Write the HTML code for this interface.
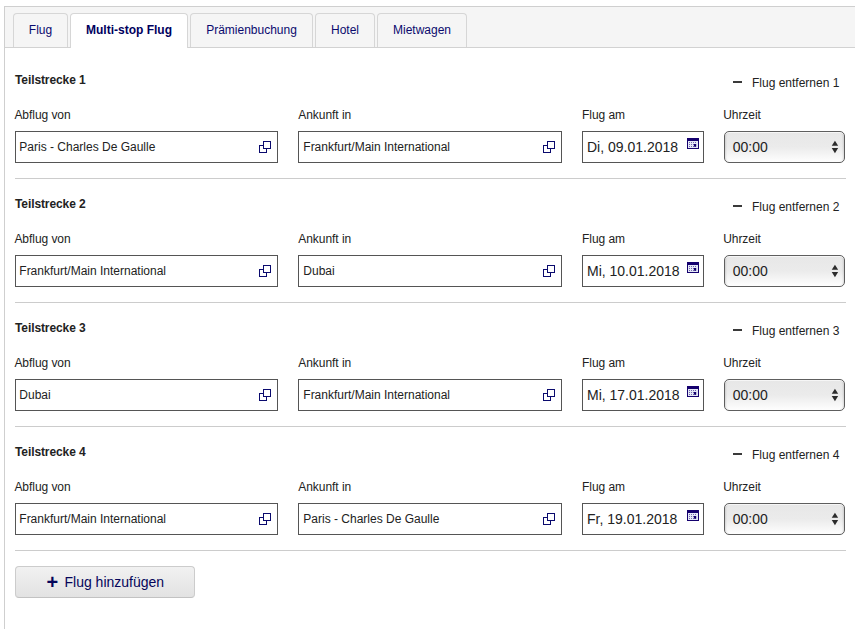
<!DOCTYPE html>
<html lang="de">
<head>
<meta charset="utf-8">
<title>Multi-stop Flug</title>
<style>
*{box-sizing:border-box;margin:0;padding:0}
html,body{width:855px;height:629px;overflow:hidden;background:#fff}
body{font-family:"Liberation Sans",Arial,Helvetica,sans-serif;font-size:12px;color:#222;position:relative}
#wrap{position:absolute;left:4px;top:6px;width:900px;height:700px;border:1px solid #cfcfcf;background:#fff}
#tabs{position:absolute;left:0;top:0;width:100%;height:41px;background:#f5f5f5;border-bottom:1px solid #d2d2d2}
.tab{position:absolute;top:6px;height:34px;border:1px solid #d6d6d6;border-bottom:none;border-radius:4px 4px 0 0;background:#f5f5f5;color:#0a0a6e;text-align:center;line-height:32px;font-size:12px}
.tab.act{background:#fff;height:35px;font-weight:bold;color:#00005e}
.sec{position:absolute;left:10px;width:831px;height:106px;border-bottom:1px solid #ccc}
.sec h3{position:absolute;left:0;top:0;font-size:12px;font-weight:bold;line-height:14px;color:#222;letter-spacing:-.1px}
.rm{position:absolute;right:6.6px;top:3px;font-size:12px;line-height:14px;color:#222}
.rm i{position:absolute;left:-19.4px;top:5px;width:9px;height:2px;background:#3a3a3a}
.lb{position:absolute;top:35px;font-size:12px;line-height:14px;color:#222;letter-spacing:-.05px;white-space:nowrap}
.in{position:absolute;top:58px;height:32px;border:1px solid #555;background:#fff;line-height:30px;padding-left:3.3px;font-size:12px;color:#222;white-space:nowrap}
.in.d{font-size:14px;padding-left:4px}
.ic{position:absolute;right:6px;top:9px;width:12px;height:12px}
.cal{position:absolute;left:104px;top:6px;width:12px;height:11px}
.sel{position:absolute;left:709px;top:58px;width:121px;height:32px;border:1px solid #5e5e5e;border-radius:5px;background:linear-gradient(#e7e7e7,#ebebeb 50%,#fefefe);box-shadow:inset 0 1px 0 #f6f6f6,inset 3px 0 2px -2px rgba(0,0,0,.12),inset -3px 0 2px -2px rgba(0,0,0,.12);font-size:14px;line-height:30px;padding-left:7.7px;color:#222}
.sel svg{position:absolute;right:5px;top:8px}
#add{position:absolute;left:10px;top:559px;width:180px;height:32px;border:1px solid #ccc;border-bottom-color:#c2c2c2;border-radius:4px;background:linear-gradient(#f1f1f1,#e2e2e2);color:#05055a;font-size:14px;line-height:30px;text-align:left;padding-left:30.4px;white-space:nowrap}
#add b{display:inline-block;font-size:20px;font-weight:bold;margin-right:6.4px;line-height:20px;vertical-align:0;transform:translateY(1.5px)}
</style>
</head>
<body>
<div id="wrap">
 <div id="tabs">
  <div class="tab" style="left:8px;width:55px">Flug</div>
  <div class="tab act" style="left:65px;width:118px">Multi-stop Flug</div>
  <div class="tab" style="left:185px;width:123px">Prämienbuchung</div>
  <div class="tab" style="left:310px;width:60px">Hotel</div>
  <div class="tab" style="left:372px;width:90px">Mietwagen</div>
 </div>

 <div class="sec" style="top:66px">
  <h3>Teilstrecke 1</h3>
  <div class="rm"><i></i>Flug entfernen 1</div>
  <div class="lb" style="left:-.6px">Abflug von</div>
  <div class="lb" style="left:283.3px">Ankunft in</div>
  <div class="lb" style="left:567px">Flug am</div>
  <div class="lb" style="left:708.2px">Uhrzeit</div>
  <div class="in" style="left:0;width:263px">Paris - Charles De Gaulle<svg class="ic" viewBox="0 0 12 12"><rect x=".5" y="4.5" width="7" height="7" fill="#fff" stroke="#0a0a6e"/><rect x="4.5" y=".5" width="7" height="7" fill="#fff" stroke="#0a0a6e"/></svg></div>
  <div class="in" style="left:283px;width:264px;padding-left:4.3px">Frankfurt/Main International<svg class="ic" viewBox="0 0 12 12"><rect x=".5" y="4.5" width="7" height="7" fill="#fff" stroke="#0a0a6e"/><rect x="4.5" y=".5" width="7" height="7" fill="#fff" stroke="#0a0a6e"/></svg></div>
  <div class="in d" style="left:567px;width:122px">Di, 09.01.2018<svg class="cal" viewBox="0 0 12 11"><rect width="12" height="11" fill="#14006e"/><rect x="1" y="3" width="10" height="7" fill="#e4e8f6"/><g fill="#7468ae"><rect x="2" y="4" width="1" height="1"/><rect x="4" y="4" width="1" height="1"/><rect x="6" y="4" width="1" height="1"/><rect x="8" y="4" width="1" height="1"/><rect x="2" y="6" width="1" height="1"/><rect x="4" y="6" width="1" height="1"/><rect x="6" y="6" width="1" height="1"/><rect x="8" y="6" width="1" height="1"/><rect x="2" y="8" width="1" height="1"/><rect x="4" y="8" width="1" height="1"/><rect x="6" y="8" width="1" height="1"/><rect x="8" y="8" width="1" height="1"/></g><rect x="6.9" y="6" width="2.3" height="2.7" fill="#14006e"/></svg></div>
  <div class="sel">00:00<svg width="8" height="14" viewBox="0 0 8 14"><path d="M3.95 .8L7.15 5.75H.75zM3.95 13.2L7.15 7.95H.75z" fill="#2c2c2c"/></svg></div>
 </div>
 <div class="sec" style="top:190px">
  <h3>Teilstrecke 2</h3>
  <div class="rm"><i></i>Flug entfernen 2</div>
  <div class="lb" style="left:-.6px">Abflug von</div>
  <div class="lb" style="left:283.3px">Ankunft in</div>
  <div class="lb" style="left:567px">Flug am</div>
  <div class="lb" style="left:708.2px">Uhrzeit</div>
  <div class="in" style="left:0;width:263px">Frankfurt/Main International<svg class="ic" viewBox="0 0 12 12"><rect x=".5" y="4.5" width="7" height="7" fill="#fff" stroke="#0a0a6e"/><rect x="4.5" y=".5" width="7" height="7" fill="#fff" stroke="#0a0a6e"/></svg></div>
  <div class="in" style="left:283px;width:264px;padding-left:4.3px">Dubai<svg class="ic" viewBox="0 0 12 12"><rect x=".5" y="4.5" width="7" height="7" fill="#fff" stroke="#0a0a6e"/><rect x="4.5" y=".5" width="7" height="7" fill="#fff" stroke="#0a0a6e"/></svg></div>
  <div class="in d" style="left:567px;width:122px">Mi, 10.01.2018<svg class="cal" viewBox="0 0 12 11"><rect width="12" height="11" fill="#14006e"/><rect x="1" y="3" width="10" height="7" fill="#e4e8f6"/><g fill="#7468ae"><rect x="2" y="4" width="1" height="1"/><rect x="4" y="4" width="1" height="1"/><rect x="6" y="4" width="1" height="1"/><rect x="8" y="4" width="1" height="1"/><rect x="2" y="6" width="1" height="1"/><rect x="4" y="6" width="1" height="1"/><rect x="6" y="6" width="1" height="1"/><rect x="8" y="6" width="1" height="1"/><rect x="2" y="8" width="1" height="1"/><rect x="4" y="8" width="1" height="1"/><rect x="6" y="8" width="1" height="1"/><rect x="8" y="8" width="1" height="1"/></g><rect x="6.9" y="6" width="2.3" height="2.7" fill="#14006e"/></svg></div>
  <div class="sel">00:00<svg width="8" height="14" viewBox="0 0 8 14"><path d="M3.95 .8L7.15 5.75H.75zM3.95 13.2L7.15 7.95H.75z" fill="#2c2c2c"/></svg></div>
 </div>
 <div class="sec" style="top:314px">
  <h3>Teilstrecke 3</h3>
  <div class="rm"><i></i>Flug entfernen 3</div>
  <div class="lb" style="left:-.6px">Abflug von</div>
  <div class="lb" style="left:283.3px">Ankunft in</div>
  <div class="lb" style="left:567px">Flug am</div>
  <div class="lb" style="left:708.2px">Uhrzeit</div>
  <div class="in" style="left:0;width:263px">Dubai<svg class="ic" viewBox="0 0 12 12"><rect x=".5" y="4.5" width="7" height="7" fill="#fff" stroke="#0a0a6e"/><rect x="4.5" y=".5" width="7" height="7" fill="#fff" stroke="#0a0a6e"/></svg></div>
  <div class="in" style="left:283px;width:264px;padding-left:4.3px">Frankfurt/Main International<svg class="ic" viewBox="0 0 12 12"><rect x=".5" y="4.5" width="7" height="7" fill="#fff" stroke="#0a0a6e"/><rect x="4.5" y=".5" width="7" height="7" fill="#fff" stroke="#0a0a6e"/></svg></div>
  <div class="in d" style="left:567px;width:122px">Mi, 17.01.2018<svg class="cal" viewBox="0 0 12 11"><rect width="12" height="11" fill="#14006e"/><rect x="1" y="3" width="10" height="7" fill="#e4e8f6"/><g fill="#7468ae"><rect x="2" y="4" width="1" height="1"/><rect x="4" y="4" width="1" height="1"/><rect x="6" y="4" width="1" height="1"/><rect x="8" y="4" width="1" height="1"/><rect x="2" y="6" width="1" height="1"/><rect x="4" y="6" width="1" height="1"/><rect x="6" y="6" width="1" height="1"/><rect x="8" y="6" width="1" height="1"/><rect x="2" y="8" width="1" height="1"/><rect x="4" y="8" width="1" height="1"/><rect x="6" y="8" width="1" height="1"/><rect x="8" y="8" width="1" height="1"/></g><rect x="6.9" y="6" width="2.3" height="2.7" fill="#14006e"/></svg></div>
  <div class="sel">00:00<svg width="8" height="14" viewBox="0 0 8 14"><path d="M3.95 .8L7.15 5.75H.75zM3.95 13.2L7.15 7.95H.75z" fill="#2c2c2c"/></svg></div>
 </div>
 <div class="sec" style="top:438px">
  <h3>Teilstrecke 4</h3>
  <div class="rm"><i></i>Flug entfernen 4</div>
  <div class="lb" style="left:-.6px">Abflug von</div>
  <div class="lb" style="left:283.3px">Ankunft in</div>
  <div class="lb" style="left:567px">Flug am</div>
  <div class="lb" style="left:708.2px">Uhrzeit</div>
  <div class="in" style="left:0;width:263px">Frankfurt/Main International<svg class="ic" viewBox="0 0 12 12"><rect x=".5" y="4.5" width="7" height="7" fill="#fff" stroke="#0a0a6e"/><rect x="4.5" y=".5" width="7" height="7" fill="#fff" stroke="#0a0a6e"/></svg></div>
  <div class="in" style="left:283px;width:264px;padding-left:4.3px">Paris - Charles De Gaulle<svg class="ic" viewBox="0 0 12 12"><rect x=".5" y="4.5" width="7" height="7" fill="#fff" stroke="#0a0a6e"/><rect x="4.5" y=".5" width="7" height="7" fill="#fff" stroke="#0a0a6e"/></svg></div>
  <div class="in d" style="left:567px;width:122px">Fr, 19.01.2018<svg class="cal" viewBox="0 0 12 11"><rect width="12" height="11" fill="#14006e"/><rect x="1" y="3" width="10" height="7" fill="#e4e8f6"/><g fill="#7468ae"><rect x="2" y="4" width="1" height="1"/><rect x="4" y="4" width="1" height="1"/><rect x="6" y="4" width="1" height="1"/><rect x="8" y="4" width="1" height="1"/><rect x="2" y="6" width="1" height="1"/><rect x="4" y="6" width="1" height="1"/><rect x="6" y="6" width="1" height="1"/><rect x="8" y="6" width="1" height="1"/><rect x="2" y="8" width="1" height="1"/><rect x="4" y="8" width="1" height="1"/><rect x="6" y="8" width="1" height="1"/><rect x="8" y="8" width="1" height="1"/></g><rect x="6.9" y="6" width="2.3" height="2.7" fill="#14006e"/></svg></div>
  <div class="sel">00:00<svg width="8" height="14" viewBox="0 0 8 14"><path d="M3.95 .8L7.15 5.75H.75zM3.95 13.2L7.15 7.95H.75z" fill="#2c2c2c"/></svg></div>
 </div>

 <div id="add"><b>+</b>Flug hinzufügen</div>
</div>
</body>
</html>
